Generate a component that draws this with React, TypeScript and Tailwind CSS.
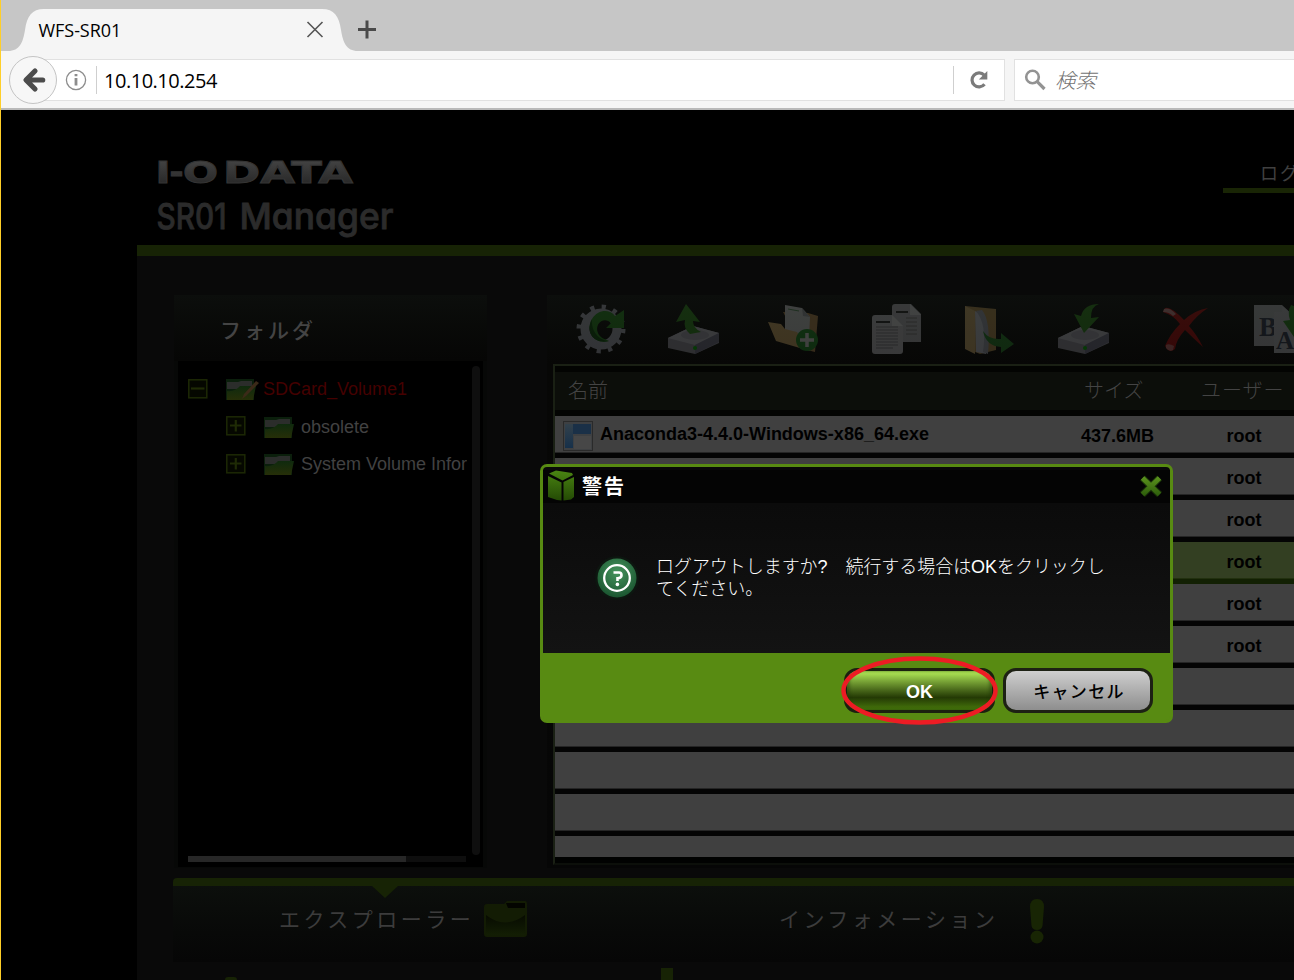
import React from "react";

const SANS = "font-['Liberation_Sans','Noto_Sans_CJK_JP',sans-serif]";

function TabBar() {
  return (
    <div className="relative h-[51px] shrink-0 bg-[#c6c6c6]">
      <svg className="absolute left-0 top-0" width="400" height="51" viewBox="0 0 400 51">
        <path d="M0 51 H8 C20 51 23 42 25 30 C27 16 32 9 44 9 H322 C334 9 339 16 341 30 C343 42 346 51 358 51 Z" fill="#f5f5f5" />
        <path d="M307.500 22 L322.500 37 M322.500 22 L307.500 37" stroke="#555" strokeWidth="1.6" fill="none" />
        <path d="M358 29.500 H376 M367 20.500 V38.500" stroke="#4a4a4a" strokeWidth="3" fill="none" />
      </svg>
      <div className="relative pl-[38.500px] pt-[18px] font-['Open_Sans','Noto_Sans',sans-serif] text-[18px] leading-6 tracking-[-0.05px] text-black">
        WFS-SR01
      </div>
    </div>
  );
}

function NavBar() {
  return (
    <div className="relative flex h-[59px] shrink-0 items-start border-b-2 border-[#b9b9b9] bg-[#f5f5f5] pt-2">
      <div className="ml-8 flex h-[42px] w-[973px] items-center border border-[#e1e1e1] bg-white">
        <svg className="ml-[32px]" width="22" height="22" viewBox="0 0 22 22">
          <circle cx="11" cy="11" r="9.600" fill="none" stroke="#8c8c8c" strokeWidth="1.300" />
          <path d="M11 9 V16.500 M11 5 V7.300" stroke="#8c8c8c" strokeWidth="2.800" fill="none" />
        </svg>
        <div className="ml-[9px] h-[28px] w-px bg-[#cfcfcf]" />
        <div className="ml-[7px] flex-1 pt-px font-['Open_Sans','Noto_Sans',sans-serif] text-[20px] leading-7 tracking-[-0.48px] text-black">
          10.10.10.254
        </div>
        <div className="h-[28px] w-px bg-[#cfcfcf]" />
        <svg className="mx-[14px]" width="22" height="22" viewBox="0 0 22 22">
          <path d="M16.500 15.300 A7 7 0 1 1 16.200 6.200" stroke="#7b7b7b" strokeWidth="3.200" fill="none" />
          <path d="M19.300 2 V10.500 H10.800 Z" fill="#7b7b7b" />
        </svg>
      </div>
      <div className="ml-[9px] flex h-[42px] flex-1 items-center border border-r-0 border-[#e1e1e1] bg-white">
        <svg className="ml-[9px]" width="22" height="22" viewBox="0 0 22 22">
          <circle cx="8.500" cy="8" r="6.300" fill="none" stroke="#939393" strokeWidth="2.600" />
          <path d="M13.200 12.700 L20.500 20" stroke="#939393" strokeWidth="3.200" />
        </svg>
        <div className="-mt-[3px] ml-[9px] font-['Noto_Sans_CJK_JP',sans-serif] text-[20.500px] font-light italic leading-7 text-[#737373]">検索</div>
      </div>
      <svg className="absolute left-[8px] top-[4px]" width="50" height="50" viewBox="0 0 50 50">
        <circle cx="25" cy="25" r="23.500" fill="#f7f7f7" stroke="#c4c4c4" />
        <path d="M34.200 25 H18 M26.500 16 L17.500 25 L26.500 34" stroke="#4c4c4c" strokeWidth="5.200" fill="none" strokeLinejoin="round" strokeLinecap="round" transform="translate(0.500 0)" />
      </svg>
    </div>
  );
}

function Header() {
  const brand = { fontFamily: "DejaVu Sans", fontWeight: 700, fontSize: 30, fill: "url(#lg)", stroke: "#343434", strokeWidth: 1, lengthAdjust: "spacingAndGlyphs" };
  const name = { fontFamily: "Inter", fontWeight: 500, fontSize: 35.5, fill: "#2b2b2b", stroke: "#2b2b2b", strokeWidth: 0.8, lengthAdjust: "spacingAndGlyphs", style: { fontFeatureSettings: "'cv11'" } };
  return (
    <div className="flex h-[135px] shrink-0 justify-between bg-black">
      <svg className="ml-[155px] mt-[40px]" width="250" height="94" viewBox="0 0 250 94">
        <defs>
          <linearGradient id="lg" gradientUnits="userSpaceOnUse" x1="0" y1="11" x2="0" y2="33">
            <stop offset="0" stopColor="#424242" />
            <stop offset="1" stopColor="#292929" />
          </linearGradient>
        </defs>
        <text x="0.500" y="33" textLength="15" {...brand}>I</text>
        <text x="14.500" y="33" textLength="14" {...brand}>-</text>
        <text x="28" y="33" textLength="35" {...brand}>O</text>
        <text x="68" y="33" textLength="130" {...brand}>DATA</text>
        <text x="1.500" y="79" textLength="70" {...name}>SR01</text>
        <text x="84.500" y="79" textLength="154" {...name}>Manager</text>
      </svg>
      <div className="mt-[49px] h-[34px] w-[71px] overflow-hidden whitespace-nowrap border-b-[5px] border-[#192505] pl-[37px] font-['Noto_Sans_CJK_JP',sans-serif] text-[18px] leading-[26px] tracking-[2px] text-[#404040]">
        ログ
      </div>
    </div>
  );
}

function Gear() {
  return (
    <>
      <circle cx="25" cy="25" r="16" fill="none" stroke="#b9bdcb" strokeWidth="9" />
      <circle cx="25" cy="25" r="22" fill="none" stroke="#b9bdcb" strokeWidth="5" strokeDasharray="4.200 7.320" />
      <path d="M33 37 C18 41 9 27 16 15 C22 5 34 5 39 12 L48 6 V24 H30 L35 19 C28 12 18 20 22 29 C24 34 29 35 33 37" fill="#2c9a24" />
      <path d="M33 37 C18 41 9 27 16 15 C15 24 20 36 33 37" fill="#0f5c10" />
    </>
  );
}
function Drive({ up }: { up: boolean }) {
  return (
    <>
      <path d="M0 34 L25 22 L51 29 V39 L27 50 L0 44 Z" fill="#a5a5b4" />
      <path d="M0 34 L25 22 L51 29 L27 41 Z" fill="#d2d2de" />
      <path d="M27 41 L51 29 V38 L27 50 Z" fill="#82829c" />
      <ellipse cx="27" cy="31" rx="14" ry="5" fill="#b7b7c6" />
      <circle cx="27" cy="44" r="2" fill="#00d000" />
      {up ? (
        <path d="M18 0 L32 18 L25 17 Q25 24 33 28 L22 30 Q15 24 17 16 L8 18 Z" fill="#359b22" />
      ) : (
        <path d="M41 0 Q33 2 33 14 L41 13 L26 29 L16 10 L23 12 Q26 0 41 0 Z" fill="#359b22" />
      )}
    </>
  );
}
function FolderPlus() {
  return (
    <>
      <path d="M15 8 L40 9 L50 12 L47 48 L35 45 Z" fill="#c79858" />
      <path d="M17 1 L34 4 L42 13 L41 34 L17 33 Z" fill="#dfe3e3" />
      <path d="M34 4 L35 12 L42 13 Z" fill="#abb0b5" />
      <path d="M20 5 L31 7" stroke="#5a9a60" />
      <path d="M0 18 L13 20 L17 25 L29 28 L42 47 L8 37 Z" fill="#e5bd73" />
      <circle cx="39" cy="36" r="11" fill="#229c2b" />
      <path d="M39 29 V43 M32 36 H46" stroke="#eee" strokeWidth="3.500" />
    </>
  );
}
function Docs() {
  return (
    <>
      <path d="M24 0 H40 L50 10 V38 H21 V3 Q21 0 24 0" fill="#c5c5cd" />
      <path d="M39 0 V11 H50 Z" fill="#ededf0" />
      <path d="M25 8 H37" stroke="#333" strokeWidth="2" />
      <path d="M35 14 H46 M35 18 H46 M35 22 H46 M35 26 H46 M35 30 H46" stroke="#888" />
      <path d="M4 11 H21 L32 22 V47 Q32 50 29 50 H4 Q1 50 1 47 V14 Q1 11 4 11" fill="#d4d4da" />
      <path d="M21 11 V22 H32 Z" fill="#f3f3f5" />
      <path d="M5 18 H19" stroke="#333" strokeWidth="2" />
      <path d="M5 23 H27 M5 26 H27 M5 29 H27 M5 32 H27 M5 35 H27 M5 38 H27 M5 41 H27 M5 44 H22" stroke="#8b8b92" />
    </>
  );
}
function FolderMove() {
  return (
    <>
      <path d="M1 2 L32 5 V46 L16 50 L1 44 Z" fill="#c49d58" />
      <path d="M11 7 L22 14 V50 L12 48 Z" fill="#d6dae6" />
      <path d="M1 2 L11 7 V50 L1 45 Z" fill="#e3bf79" />
      <path d="M18 6 Q27 17 24 50 L19 48 Q23 20 12 7 Z" fill="#aeb3c2" />
      <path d="M19 27 Q25 36 37 35 V29 L50 40 L37 49 V43 Q22 42 19 27" fill="#2b9330" />
    </>
  );
}
function Cross() {
  return (
    <>
      <path d="M4 4 Q10 2 23 16 Q34 6 47 4 Q36 11 28 22 Q36 31 42 43 Q32 34 24 26 Q15 36 14 45 Q8 50 4 42 Q9 30 19 20 Q12 11 2 8 Z" fill="#c40d0d" />
      <path d="M3 5 Q8 3 15 10 L12 12 Q8 8 2 8 Z" fill="#d99" />
      <path d="M5 41 Q8 39 13 42 L12 46 Q8 48 5 44 Z" fill="#d77" />
    </>
  );
}
function Rename() {
  return (
    <>
      <path d="M0 1 H28 V42 H0 Z" fill="#c3c6cc" />
      <text x="5" y="32" fontFamily="Liberation Serif" fontWeight="700" fontSize="27" fill="#39435a">B</text>
      <path d="M20 8 H28 V1 L40 12 V49 H20 Z" fill="#c9ccd4" />
      <text x="22" y="45" fontFamily="Liberation Serif" fontWeight="700" fontSize="25" fill="#39435a">A</text>
      <path d="M37 1 Q33 8 36 16 L29 17 L40 33 V2 Z" fill="#2f9524" />
    </>
  );
}

const TOOLS: { w: string; box: number; el: React.ReactNode }[] = [
  { w: "w-[92px]", box: 52, el: <Gear /> },
  { w: "w-[100px]", box: 52, el: <Drive up /> },
  { w: "w-[103px]", box: 52, el: <FolderPlus /> },
  { w: "w-[93px]", box: 52, el: <Docs /> },
  { w: "w-[94px]", box: 52, el: <FolderMove /> },
  { w: "w-[103px]", box: 52, el: <Drive up={false} /> },
  { w: "w-[93px]", box: 52, el: <Cross /> },
  { w: "w-[40px]", box: 40, el: <Rename /> },
];

function TreeRow({ indent, open, label, red }: { indent: string; open?: boolean; label: string; red?: boolean }) {
  return (
    <div className={`flex h-[37.500px] items-center whitespace-nowrap ${indent}`}>
      <svg width="20" height="20" viewBox="0 0 20 20" className="-mt-[2px] shrink-0">
        <rect x="0.800" y="0.800" width="18" height="18" fill="#050700" stroke="#1d2805" strokeWidth="1.500" />
        <path d={open ? "M3 9.500 H16.500" : "M4 9.500 H15.500 M9.800 4 V15.500"} stroke="#1f2b05" strokeWidth="2.200" />
      </svg>
      <svg width="34" height="23" viewBox="0 0 34 23" className="ml-[18px] shrink-0">
        <defs>
          <linearGradient id="leaf" x1="0" y1="0" x2="0" y2="1">
            <stop offset="0" stopColor="#0f2a0e" />
            <stop offset="1" stopColor="#262f08" />
          </linearGradient>
        </defs>
        <path d="M0 1 H28 V22 H0 Z" fill="#0b1f0c" />
        <path d="M1 4 H12 L15 3 H26 V11 H1 Z" fill="#2b2d2b" />
        <path d="M1 13 Q9 14 14 8 H30 L27 22 H1 Z" fill="url(#leaf)" />
        {red && <path d="M16 21 L18 16 L30 3 L33 5 L20 18 Z" fill="#3b2a18" />}
      </svg>
      <span className={`ml-[3px] text-[18px] ${red ? "text-[#450000]" : "pl-[0.5px] text-[#424242]"}`}>{label}</span>
    </div>
  );
}

function FolderPanel() {
  return (
    <div className="h-[573px] w-[313px] shrink-0 bg-[#070807] px-1">
      <div className="-mx-1 h-[66px] bg-linear-to-b from-[#0c0e0c] to-[#060605] pl-[46px] font-['Noto_Sans_CJK_JP',sans-serif] text-[21px] font-medium leading-[68px] tracking-[3px] text-[#444]">
        フォルダ
      </div>
      <div className="flex h-[506px] flex-col bg-black pt-[5px]">
        <div className="flex h-[489px] justify-between pr-[3px]">
          <div className="w-[289px] overflow-hidden pl-[10px] pt-[5px]">
            <TreeRow indent="" open red label="SDCard_Volume1" />
            <TreeRow indent="pl-[37.500px]" label="obsolete" />
            <TreeRow indent="pl-[37.500px]" label="System Volume Infor" />
          </div>
          <div className="w-2 rounded bg-[#0f0f0f]" />
        </div>
        <div className="ml-[10px] mt-px h-[6px] w-[278px] bg-[#0e0e0e]">
          <div className="h-full w-[218px] bg-[#272727]" />
        </div>
      </div>
    </div>
  );
}

const ROWS: { name?: string; size?: string; user?: string; selected?: boolean }[] = [
  { name: "Anaconda3-4.4.0-Windows-x86_64.exe", size: "437.6MB", user: "root" },
  { user: "root" },
  { user: "root" },
  { user: "root", selected: true },
  { user: "root" },
  { user: "root" },
  {},
  {},
  {},
  {},
];

function FilePanel() {
  return (
    <div className="ml-[60px] h-[573px] flex-1 overflow-hidden bg-linear-to-b from-[#0c0e0c] via-[#070706] via-[12%] to-[#060606]">
      <div className="flex h-[69px] pl-[29px] pt-[9px]">
        {TOOLS.map((t, i) => (
          <div key={i} className={`shrink-0 ${t.w}`}>
            <svg width={t.box} height="52" viewBox={`0 0 ${t.box} 52`} className="opacity-[0.24]">{t.el}</svg>
          </div>
        ))}
      </div>
      <div className="ml-[6px] h-[501px] border-2 border-r-0 border-[#1a2014] border-b-[#0c0f0a] bg-[#010201]">
        <div className="flex h-[50px] items-center border-y-[6px] border-[#030402] bg-[#0c0e0a] pl-[13px] font-['Noto_Sans_CJK_JP',sans-serif] text-[20px] font-light text-[#444]">
          <span className="-mt-[3px] w-[516px]">名前</span>
          <span className="-mt-[3px] w-[117px]">サイズ</span>
          <span className="-mt-[3px] tracking-[1px]">ユーザー</span>
        </div>
        {ROWS.map((r, i) => (
          <div key={i} className={`h-[42px] border-b-[5px] ${r.selected ? "border-[#122003]" : "border-[#040404]"}`}>
            <div className={`flex h-[37px] items-center border-b pl-[8px] text-[18px] font-bold text-black ${r.selected ? "border-[#22300f] bg-[#333f22]" : "border-[#252525] bg-[#404040]"}`}>
              {r.name ? (
                <svg width="30" height="30" viewBox="0 0 30 30" className="mt-[4px]">
                  <defs>
                    <linearGradient id="pane" x1="0" y1="0" x2="0" y2="1">
                      <stop offset="0" stopColor="#33414b" />
                      <stop offset="1" stopColor="#16304a" />
                    </linearGradient>
                  </defs>
                  <rect x="0.500" y="0.500" width="29" height="29" fill="#3e4042" stroke="#2a2a2a" />
                  <path d="M2 3 H10 V27 H2 Z" fill="url(#pane)" />
                  <path d="M10 3 H28 V13 H10 Z" fill="#1a3047" />
                  <path d="M11 15 H28 V28 H11 Z" fill="#474747" />
                </svg>
              ) : (
                <span className="w-[30px]" />
              )}
              <span className="w-[481px] whitespace-nowrap pl-[7px]">{r.name}</span>
              <span className="w-[145px] pl-[7px] pt-[4px]">{r.size}</span>
              <span className="pl-[7.500px] pt-[4px]">{r.user}</span>
            </div>
          </div>
        ))}
        <div className="h-[21px] bg-[#404040]" />
      </div>
    </div>
  );
}

function BottomNav() {
  return (
    <div className="relative ml-[36px] mt-[10px] h-[84px] shrink-0 rounded-tl border-t-8 border-[#172305] bg-linear-to-b from-[#0c0f0c] to-[#060606]">
      <svg className="absolute left-[199px] top-0" width="26" height="12" viewBox="0 0 26 12"><path d="M0 0 H26 L13 12 Z" fill="#172305" /></svg>
      <div className="flex pt-[13px] font-['Noto_Sans_CJK_JP',sans-serif] text-[21px] leading-[38px] tracking-[3.500px] text-[#3c3c3c]">
        <span className="ml-[106px] w-[205px] whitespace-nowrap">エクスプローラー</span>
        <svg width="45" height="40" viewBox="0 0 45 40" className="mt-px">
          <defs>
            <linearGradient id="tray" x1="0" y1="0" x2="0" y2="1">
              <stop offset="0" stopColor="#070b01" />
              <stop offset="1" stopColor="#131e04" />
            </linearGradient>
          </defs>
          <path d="M3 4 H20 L23 1 H41 Q43 1 43 4 V34 Q43 37 40 37 H3 Q0 37 0 34 V7 Q0 4 3 4" fill="#131c04" />
          <path d="M22 3 H41 V8 H24 Z" fill="#030400" />
          <path d="M2 15 Q21 30 41 15 V35 H2 Z" fill="url(#tray)" />
        </svg>
        <span className="ml-[250px] w-[251px] whitespace-nowrap">インフォメーション</span>
        <svg width="14" height="46" viewBox="0 0 14 46">
          <path d="M7 0 Q14 0 14 8 L12.500 27 Q11.500 31 7 31 Q2.500 31 1.500 27 L0 8 Q0 0 7 0" fill="#182504" />
          <circle cx="7" cy="38" r="6.500" fill="#182504" />
        </svg>
      </div>
    </div>
  );
}

function Dialog() {
  return (
    <div className={`absolute left-[540px] top-[464px] h-[259px] w-[633px] rounded-[7px] border-[3px] border-[#588b12] bg-[#588b12] ${SANS}`}>
      <div className="h-[186px] rounded-t bg-linear-to-b from-[#090909] to-[#131313] pt-[3px]">
        <div className="flex h-[33px] items-center bg-[#040404] pl-[4px] pr-[6px]">
          <svg width="28" height="31" viewBox="0 0 28 31" className="-mt-[2px]">
            <defs>
              <linearGradient id="box" x1="0" y1="0" x2="0" y2="1">
                <stop offset="0" stopColor="#4a8512" />
                <stop offset="1" stopColor="#244a05" />
              </linearGradient>
            </defs>
            <path d="M1 6 L14.500 12.500 V30.500 L10 30 L1 27 Z M16.500 12 L27 7 V27 L24 29.500 L16.500 30.500 Z M2 3.500 L9 0.500 L25 3 L26 5 L15.500 10.500 Z" fill="url(#box)" />
          </svg>
          <span className="-mt-[2px] ml-[7px] flex-1 font-['Noto_Sans_CJK_JP',sans-serif] text-[20px] font-bold tracking-[2px] text-white">警告</span>
          <svg width="26" height="24" viewBox="0 0 26 24" className="-mt-[2px]">
            <defs>
              <linearGradient id="xg" gradientUnits="userSpaceOnUse" x1="0" y1="2" x2="0" y2="22">
                <stop offset="0" stopColor="#5d951e" />
                <stop offset="1" stopColor="#2c5c0b" />
              </linearGradient>
            </defs>
            <path d="M4.500 4 L21.500 20.500 M21.500 4 L4.500 20.500" stroke="#183208" strokeWidth="7" />
            <path d="M4.500 4 L21.500 20.500 M21.500 4 L4.500 20.500" stroke="url(#xg)" strokeWidth="5" />
          </svg>
        </div>
        <div className="flex pl-[51px] pt-[51px]">
          <svg width="46" height="46" viewBox="0 0 46 46">
            <defs>
              <radialGradient id="q" cx="0.5" cy="0.35" r="0.65">
                <stop offset="0" stopColor="#46945d" />
                <stop offset="1" stopColor="#1a5530" />
              </radialGradient>
            </defs>
            <circle cx="23" cy="24" r="22" fill="#0d1610" />
            <circle cx="23" cy="24" r="19.500" fill="url(#q)" />
            <circle cx="23" cy="24" r="12.800" fill="none" stroke="#fff" strokeWidth="2.300" />
            <path d="M19.500 18.500 H25 Q27.500 18.500 27.500 21.200 Q27.500 24 23.500 24.300 V27" fill="none" stroke="#fff" strokeWidth="2.600" />
            <circle cx="23.400" cy="30.400" r="1.800" fill="#fff" />
          </svg>
          <div className="ml-[16px] mt-[2px] whitespace-nowrap text-[18px] font-light leading-[22px] tracking-[-0.050px] text-white">
            ログアウトしますか?　続行する場合はOKをクリックし
            <br />
            てください。
          </div>
        </div>
      </div>
      <div className="flex justify-end gap-2 pr-[17px] pt-[15px]">
        <button className="h-[45px] w-[151px] rounded-[13px] border-[3px] border-[#1b210f] bg-linear-to-b from-[#b6f05a] via-[#243a05] via-[68%] to-[#487a0c] pt-[3px] text-[18px] font-bold text-white shadow-[inset_3px_0_3px_#20360766,inset_-3px_0_3px_#20360766]">OK</button>
        <button className="h-[45px] w-[150px] rounded-[13px] border-[3px] border-[#1d2114] bg-linear-to-b from-[#cfcfcf] to-[#8e8e8e] pl-[2px] font-['Noto_Sans_CJK_JP',sans-serif] text-[17px] font-medium tracking-[1.300px] text-black">キャンセル</button>
      </div>
      <svg className="absolute left-[297px] top-[189px]" width="160" height="72" viewBox="0 0 160 72">
        <ellipse cx="79.500" cy="34.500" rx="76" ry="32" fill="none" stroke="#ed1c24" strokeWidth="4.500" />
      </svg>
    </div>
  );
}

export default function App() {
  return (
    <div className={`relative flex h-[980px] w-[1294px] flex-col overflow-hidden bg-black ${SANS}`}>
      <TabBar />
      <NavBar />
      <Header />
      <div className="ml-[137px] flex h-[735px] shrink-0 flex-col overflow-hidden border-t-[11px] border-[#172305] bg-[#090909]">
        <div className="ml-[37px] mt-[39px] flex">
          <FolderPanel />
          <FilePanel />
        </div>
        <BottomNav />
        <div className="mt-[6px] flex shrink-0 items-end pl-[88px]">
          <div className="h-[3px] w-3 rounded-t-full bg-[#172305]" />
          <div className="ml-[424px] h-[12px] w-3 bg-[#172305]" />
        </div>
      </div>
      <Dialog />
      <div className="absolute left-0 top-0 h-full w-px bg-[#ffcf28]" />
    </div>
  );
}
